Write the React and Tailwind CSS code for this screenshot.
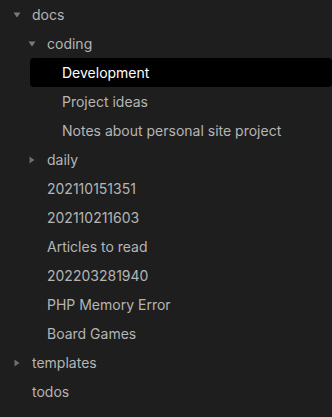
const tree = [
  {
    name: 'docs',
    open: true,
    children: [
      {
        name: 'coding',
        open: true,
        children: [
          { name: 'Development', active: true },
          { name: 'Project ideas' },
          { name: 'Notes about personal site project' },
        ],
      },
      { name: 'daily', children: [] },
      { name: '202110151351' },
      { name: '202110211603' },
      { name: 'Articles to read' },
      { name: '202203281940' },
      { name: 'PHP Memory Error' },
      { name: 'Board Games' },
    ],
  },
  { name: 'templates', children: [] },
  { name: 'todos' },
];

// each level shifts the whole row 15px to the right
const indent = ['ml-0', 'ml-[15px]', 'ml-[30px]'];

function Arrow({ open }) {
  return open ? (
    <svg width="8" height="6" viewBox="0 0 8 6" className="block">
      <path d="M0.5 0.5 L7.5 0.5 L4 5.5 Z" fill="#7a7a7a" />
    </svg>
  ) : (
    <svg width="6" height="8" viewBox="0 0 6 8" className="block">
      <path d="M0.5 0.5 L5.5 4 L0.5 7.5 Z" fill="#6e6e6e" />
    </svg>
  );
}

function Node({ item, depth }) {
  const isFolder = !!item.children;
  return (
    <>
      <div
        className={`relative h-[29px] flex items-center ${indent[depth]} ${
          item.active ? 'bg-black rounded-[4px] text-white' : 'text-[#b5b5b5]'
        }`}
      >
        {isFolder && (
          <span className={`absolute top-1/2 -translate-y-1/2 ${item.open ? 'left-[13px]' : 'left-[14px]'}`}>
            <Arrow open={item.open} />
          </span>
        )}
        <span className="pl-[32px]">{item.name}</span>
      </div>
      {isFolder &&
        item.open &&
        item.children.map((c) => <Node key={c.name} item={c} depth={depth + 1} />)}
    </>
  );
}

export default function App() {
  return (
    <div
      className="w-[332px] h-[417px] bg-[#1e1e1e] text-[14px] overflow-hidden"
      style={{ fontFamily: 'Inter, "Noto Sans", sans-serif' }}
    >
      {tree.map((item) => (
        <Node key={item.name} item={item} depth={0} />
      ))}
    </div>
  );
}
